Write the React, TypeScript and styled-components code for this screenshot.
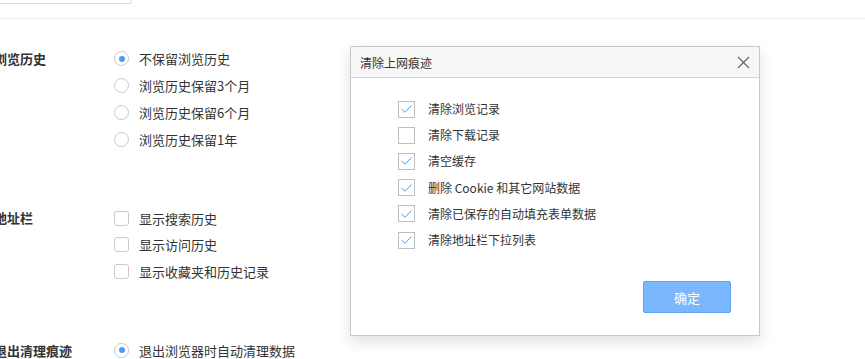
import { createGlobalStyle, styled } from "styled-components";

const GlobalStyle = createGlobalStyle`
    html, body {
        margin: 0;
        padding: 0;
        background: #ffffff;
        overflow: hidden;
    }
    body {
        font-family: "Noto Sans CJK SC", "Noto Sans", sans-serif;
        color: #333333;
        font-size: 13px;
    }
`;

const Page = styled.div`
    position: relative;
    width: 865px;
    height: 359px;
    overflow: hidden;
`;

const TopBar = styled.div`
    display: flow-root;
    height: 18px;
    border-bottom: 1px solid #ececec;
`;

const SearchBox = styled.div`
    width: 150px;
    height: 24px;
    margin-top: -20px;
    margin-left: -18px;
    border: 1px solid #dcdcdc;
    border-radius: 2px;
    box-sizing: border-box;
`;

const Settings = styled.div`
    margin-left: -6px;
    padding-top: 26px;
`;

const Section = styled.div`
    display: grid;
    grid-template-columns: 120px auto;
    margin-bottom: 52px;
`;

const SectionLabel = styled.div<{ $rowHeight: number }>`
    font-weight: bold;
    font-size: 13px;
    line-height: ${({ $rowHeight }) => $rowHeight}px;
    white-space: nowrap;
    color: #333;
`;

const OptionList = styled.div`
    display: flex;
    flex-direction: column;
`;

const OptionRow = styled.div<{ $rowHeight: number }>`
    display: flex;
    align-items: center;
    height: ${({ $rowHeight }) => $rowHeight}px;
    gap: 10px;
    white-space: nowrap;
`;

const Radio = styled.span<{ $checked?: boolean }>`
    position: relative;
    width: 15px;
    height: 15px;
    box-sizing: border-box;
    border: 1px solid #c9c9c9;
    border-radius: 50%;
    background: #fff;

    &::after {
        content: "";
        display: ${({ $checked }) => ($checked ? "block" : "none")};
        position: absolute;
        left: 3.5px;
        top: 3.5px;
        width: 6px;
        height: 6px;
        border-radius: 50%;
        background: #4b9cf7;
    }
`;

const RoundCheck = styled.span`
    width: 15px;
    height: 15px;
    box-sizing: border-box;
    border: 1px solid #cacaca;
    border-radius: 3px;
    background: #fff;
`;

const OptionText = styled.span`
    font-size: 13px;
    line-height: 1;
    color: #333;
`;

const Dialog = styled.div`
    position: absolute;
    left: 350px;
    top: 46px;
    width: 410px;
    height: 290px;
    box-sizing: border-box;
    border: 1px solid #c8c8c8;
    background: #fff;
    display: flex;
    flex-direction: column;
    box-shadow: 0 6px 14px rgba(0, 0, 0, 0.12);
`;

const DialogHeader = styled.div`
    display: flex;
    align-items: center;
    justify-content: space-between;
    height: 30px;
    padding: 0 9px 0 9px;
    background: #f7f7f7;
    border-bottom: 1px solid #d6d6d6;
`;

const DialogTitle = styled.span`
    font-size: 12px;
    color: #333;
`;

const CloseButton = styled.span`
    display: flex;
    width: 14px;
    height: 14px;
    align-items: center;
    justify-content: center;
`;

const DialogBody = styled.div`
    flex: 1;
    padding: 18px 0 0 47px;
`;

const DialogRow = styled.div`
    display: flex;
    align-items: center;
    gap: 13px;
    height: 26.2px;
`;

const SquareCheck = styled.span`
    display: flex;
    align-items: center;
    justify-content: center;
    width: 17px;
    height: 17px;
    box-sizing: border-box;
    border: 1px solid #bebebe;
    background: #fff;
`;

const DialogText = styled.span`
    font-size: 12px;
    line-height: 1;
    color: #333;
`;

const DialogFooter = styled.div`
    display: flex;
    justify-content: flex-end;
    padding: 0 28px 22px 0;
`;

const ConfirmButton = styled.button`
    width: 88px;
    height: 32px;
    box-sizing: border-box;
    border: 1px solid #5ca3f4;
    border-radius: 2px;
    background: #7ab7ff;
    color: #fff;
    font-family: "Noto Sans CJK SC", sans-serif;
    font-size: 13px;
    padding: 0;
`;

const historyOptions = ["不保留浏览历史", "浏览历史保留3个月", "浏览历史保留6个月", "浏览历史保留1年"];
const addressOptions = ["显示搜索历史", "显示访问历史", "显示收藏夹和历史记录"];
const clearItems = [
    { text: "清除浏览记录", checked: true },
    { text: "清除下载记录", checked: false },
    { text: "清空缓存", checked: true },
    { text: "删除 Cookie 和其它网站数据", checked: true },
    { text: "清除已保存的自动填充表单数据", checked: true },
    { text: "清除地址栏下拉列表", checked: true },
];

const CheckMark = () => (
    <svg width="13" height="10" viewBox="0 0 13 10">
        <polyline points="1.5,5 5,8.3 11.5,1.5" fill="none" stroke="#4a9bf5" strokeWidth="1" />
    </svg>
);

const CloseIcon = () => (
    <svg width="13" height="13" viewBox="0 0 13 13">
        <path d="M1 1 L12 12 M12 1 L1 12" stroke="#666" strokeWidth="1.2" />
    </svg>
);

const App = () => {
    return (
        <Page>
            <GlobalStyle />
            <TopBar>
                <SearchBox />
            </TopBar>

            <Settings>
                <Section>
                    <SectionLabel $rowHeight={27}>浏览历史</SectionLabel>
                    <OptionList>
                        {historyOptions.map((opt, i) => (
                            <OptionRow key={opt} $rowHeight={27}>
                                <Radio $checked={i === 0} />
                                <OptionText>{opt}</OptionText>
                            </OptionRow>
                        ))}
                    </OptionList>
                </Section>

                <Section>
                    <SectionLabel $rowHeight={26.5}>地址栏</SectionLabel>
                    <OptionList>
                        {addressOptions.map((opt) => (
                            <OptionRow key={opt} $rowHeight={26.5}>
                                <RoundCheck />
                                <OptionText>{opt}</OptionText>
                            </OptionRow>
                        ))}
                    </OptionList>
                </Section>

                <Section>
                    <SectionLabel $rowHeight={27}>退出清理痕迹</SectionLabel>
                    <OptionList>
                        <OptionRow $rowHeight={27}>
                            <Radio $checked />
                            <OptionText>退出浏览器时自动清理数据</OptionText>
                        </OptionRow>
                    </OptionList>
                </Section>
            </Settings>

            <Dialog>
                <DialogHeader>
                    <DialogTitle>清除上网痕迹</DialogTitle>
                    <CloseButton>
                        <CloseIcon />
                    </CloseButton>
                </DialogHeader>
                <DialogBody>
                    {clearItems.map((item) => (
                        <DialogRow key={item.text}>
                            <SquareCheck>{item.checked && <CheckMark />}</SquareCheck>
                            <DialogText>{item.text}</DialogText>
                        </DialogRow>
                    ))}
                </DialogBody>
                <DialogFooter>
                    <ConfirmButton>确定</ConfirmButton>
                </DialogFooter>
            </Dialog>
        </Page>
    );
};

export default App;
